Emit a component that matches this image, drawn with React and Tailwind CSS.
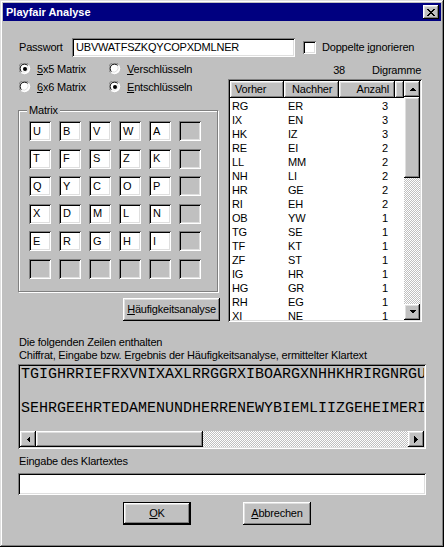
import React from 'react';

const raised = 'shadow-[inset_-1px_-1px_#000,inset_1px_1px_#fff,inset_-2px_-2px_#808080,inset_2px_2px_#dfdfdf]';
const sunken = 'shadow-[inset_1px_1px_#808080,inset_-1px_-1px_#fff,inset_2px_2px_#000,inset_-2px_-2px_#dfdfdf]';
const checker = 'bg-[repeating-conic-gradient(#c0c0c0_0_25%,#ffffff_0_50%)] bg-[length:2px_2px]';

const matrix = [
  ['U', 'B', 'V', 'W', 'A', ''],
  ['T', 'F', 'S', 'Z', 'K', ''],
  ['Q', 'Y', 'C', 'O', 'P', ''],
  ['X', 'D', 'M', 'L', 'N', ''],
  ['E', 'R', 'G', 'H', 'I', ''],
  ['', '', '', '', '', ''],
];

const digrams = [
  ['RG', 'ER', 3], ['IX', 'EN', 3], ['HK', 'IZ', 3], ['RE', 'EI', 2],
  ['LL', 'MM', 2], ['NH', 'LI', 2], ['HR', 'GE', 2], ['RI', 'EH', 2],
  ['OB', 'YW', 1], ['TG', 'SE', 1], ['TF', 'KT', 1], ['ZF', 'ST', 1],
  ['IG', 'HR', 1], ['HG', 'GR', 1], ['RH', 'EG', 1], ['XI', 'NE', 1],
];

// little black arrow for scroll buttons
const Arrow = ({ dir }) => {
  const pts = {
    up: '0,4 7,4 3.5,0.5',
    down: '0,0 7,0 3.5,3.5',
    left: '4,0 4,7 0.5,3.5',
    right: '0,0 0,7 3.5,3.5',
  }[dir];
  const vert = dir === 'up' || dir === 'down';
  return (
    <svg width={vert ? 7 : 4} height={vert ? 4 : 7} shapeRendering="crispEdges">
      <polygon points={pts} fill="#000" />
    </svg>
  );
};

const ScrollBtn = ({ dir }) => (
  <div className={`w-[16px] h-[16px] shrink-0 bg-[#c0c0c0] ${raised} flex items-center justify-center`}>
    <Arrow dir={dir} />
  </div>
);

const Radio = ({ checked }) => (
  <svg width="12" height="12" viewBox="0 0 12 12" className="shrink-0">
    <circle cx="6" cy="6" r="5" fill="#fff" />
    <path d="M1.2 9.2 A5.5 5.5 0 0 1 9.2 1.2" fill="none" stroke="#808080" strokeWidth="1" />
    <path d="M2.4 8.6 A4.3 4.3 0 0 1 8.6 2.4" fill="none" stroke="#000" strokeWidth="1" />
    <path d="M9.8 2.2 A5.5 5.5 0 0 1 2.2 9.8" fill="none" stroke="#fff" strokeWidth="1" />
    <path d="M8.8 3.2 A4.3 4.3 0 0 1 3.2 8.8" fill="none" stroke="#dfdfdf" strokeWidth="1" />
    {checked && <circle cx="6" cy="6" r="2" fill="#000" />}
  </svg>
);

const CloseGlyph = () => {
  const px = [
    [0, 0], [1, 0], [6, 0], [7, 0],
    [1, 1], [2, 1], [5, 1], [6, 1],
    [2, 2], [3, 2], [4, 2], [5, 2],
    [3, 3], [4, 3],
    [2, 4], [3, 4], [4, 4], [5, 4],
    [1, 5], [2, 5], [5, 5], [6, 5],
    [0, 6], [1, 6], [6, 6], [7, 6],
  ];
  return (
    <svg width="8" height="7" shapeRendering="crispEdges">
      {px.map(([x, y], i) => <rect key={i} x={x} y={y} width="1" height="1" fill="#000" />)}
    </svg>
  );
};

export default function App() {
  return (
    <div className={`w-[444px] h-[547px] bg-[#c0c0c0] p-[3px] font-['Liberation_Sans',Arial,sans-serif] text-[11px] tracking-[-0.2px] text-black leading-[13px] shadow-[inset_-1px_-1px_#000,inset_1px_1px_#dfdfdf,inset_-2px_-2px_#808080,inset_2px_2px_#fff]`}>
      {/* title bar */}
      <div className="h-[18px] bg-[#000080] flex items-center justify-between pl-[3px] pr-[2px]">
        <span className="text-white font-bold text-[11px] tracking-normal">Playfair Analyse</span>
        <div className={`w-[16px] h-[14px] bg-[#c0c0c0] ${raised} flex items-center justify-center`}>
          <CloseGlyph />
        </div>
      </div>

      <div className="px-[15px]">
        {/* password row */}
        <div className="mt-[17px] h-[19px] flex items-center">
          <span className="w-[54px] pl-[1px]">Passwort</span>
          <div className={`w-[223px] h-[19px] bg-white ${sunken} pl-[4px] flex items-center`}>
            UBVWATFSZKQYCOPXDMLNER
          </div>
          <div className={`ml-[8px] w-[13px] h-[13px] bg-white ${sunken}`} />
          <span className="ml-[6px]">Doppelte <span className="underline">i</span>gnorieren</span>
        </div>

        <div className="flex">
          {/* left column */}
          <div className="w-[202px]">
            <div className="mt-[4px] grid grid-cols-[91px_1fr] gap-y-[2px]">
              <div className="h-[16px] ml-[1px] flex items-center gap-[6px]"><Radio checked /><span><span className="underline">5</span>x5 Matrix</span></div>
              <div className="h-[16px] flex items-center gap-[6px]"><Radio /><span><span className="underline">V</span>erschlüsseln</span></div>
              <div className="h-[16px] ml-[1px] flex items-center gap-[6px]"><Radio /><span><span className="underline">6</span>x6 Matrix</span></div>
              <div className="h-[16px] flex items-center gap-[6px]"><Radio checked /><span><span className="underline">E</span>ntschlüsseln</span></div>
            </div>

            <div className="relative mt-[15px] h-[182px] w-[200px] border border-[#808080] shadow-[inset_1px_1px_#fff,1px_1px_#fff] pt-[10px] pl-[10px]">
              <span className="absolute top-[-7px] left-[8px] px-[2px] bg-[#c0c0c0]">Matrix</span>
              <div className="grid grid-cols-[repeat(6,22px)] gap-x-[8px] gap-y-[7.6px]">
                {matrix.flat().map((c, i) => (
                  <div
                    key={i}
                    className={`h-[20px] ${sunken} ${c ? 'bg-white' : 'bg-[#c0c0c0]'} pl-[4px] flex items-center`}
                  >
                    {c}
                  </div>
                ))}
              </div>
            </div>

            <div className={`mt-[6px] ml-[105px] w-[97px] h-[23px] bg-[#c0c0c0] ${raised} flex items-center justify-center`}>
              <span><span className="underline">H</span>äufigkeitsanalyse</span>
            </div>
          </div>

          {/* right column: digram list */}
          <div className="ml-[8px] w-[194px]">
            <div className="mt-[6px] h-[14px] flex items-center">
              <span className="w-[117px] text-right">38</span>
              <span className="ml-[27px]">Digramme</span>
            </div>
            <div className={`mt-[2px] h-[243px] bg-white ${sunken} p-[2px] flex`}>
              <div className="flex-1 overflow-hidden">
                <div className="h-[17px] flex">
                  <div className={`w-[54px] ${raised} bg-[#c0c0c0] pl-[5px] flex items-center`}>Vorher</div>
                  <div className={`w-[55px] ${raised} bg-[#c0c0c0] pl-[8px] flex items-center`}>Nachher</div>
                  <div className={`w-[56px] ${raised} bg-[#c0c0c0] pr-[6px] flex items-center justify-end`}>Anzahl</div>
                  <div className={`flex-1 ${raised} bg-[#c0c0c0]`} />
                </div>
                <div className="pt-[1px]">
                  {digrams.map(([a, b, n], i) => (
                    <div key={i} className="h-[14px] flex items-center">
                      <span className="w-[54px] pl-[2px]">{a}</span>
                      <span className="w-[55px] pl-[4px]">{b}</span>
                      <span className="w-[56px] pr-[7px] text-right">{n}</span>
                    </div>
                  ))}
                </div>
              </div>
              <div className="w-[16px] flex flex-col">
                <ScrollBtn dir="up" />
                <div className={`h-[81px] bg-[#c0c0c0] ${raised}`} />
                <div className={`flex-1 ${checker}`} />
                <ScrollBtn dir="down" />
              </div>
            </div>
          </div>
        </div>

        {/* cipher / plain text lines */}
        <div className="mt-[14px] pl-[1px]">
          <div>Die folgenden Zeilen enthalten</div>
          <div>Chiffrat, Eingabe bzw. Ergebnis der Häufigkeitsanalyse, ermittelter Klartext</div>
        </div>
        <div className={`mt-[2px] h-[85px] bg-[#c0c0c0] ${sunken} p-[2px] flex flex-col`}>
          <div className="flex-1 overflow-hidden pl-[1px] font-['Liberation_Mono','Courier_New',monospace] text-[15px] tracking-normal leading-[17px] whitespace-nowrap">
            <div>TGIGHRRIEFRXVNIXAXLRRGGRXIBOARGXNHHKHRIRGNRGUE</div>
            <div>&nbsp;</div>
            <div>SEHRGEEHRTEDAMENUNDHERRENEWYBIEMLIIZGEHEIMERI</div>
          </div>
          <div className="h-[16px] flex">
            <ScrollBtn dir="left" />
            <div className={`w-[167px] bg-[#c0c0c0] ${raised}`} />
            <div className={`flex-1 ${checker}`} />
            <ScrollBtn dir="right" />
          </div>
        </div>

        {/* plaintext input */}
        <div className="mt-[6px] h-[13px] pl-[1px]">Eingabe des Klartextes</div>
        <div className={`mt-[5px] h-[22px] bg-white ${sunken}`} />

        {/* buttons */}
        <div className="mt-[7px] flex">
          <div className={`ml-[105px] w-[68px] h-[23px] border border-black bg-[#c0c0c0] ${raised} flex items-center justify-center`}>
            <span><span className="underline">O</span>K</span>
          </div>
          <div className={`ml-[52px] w-[68px] h-[23px] bg-[#c0c0c0] ${raised} flex items-center justify-center`}>
            <span><span className="underline">A</span>bbrechen</span>
          </div>
        </div>
      </div>
    </div>
  );
}
